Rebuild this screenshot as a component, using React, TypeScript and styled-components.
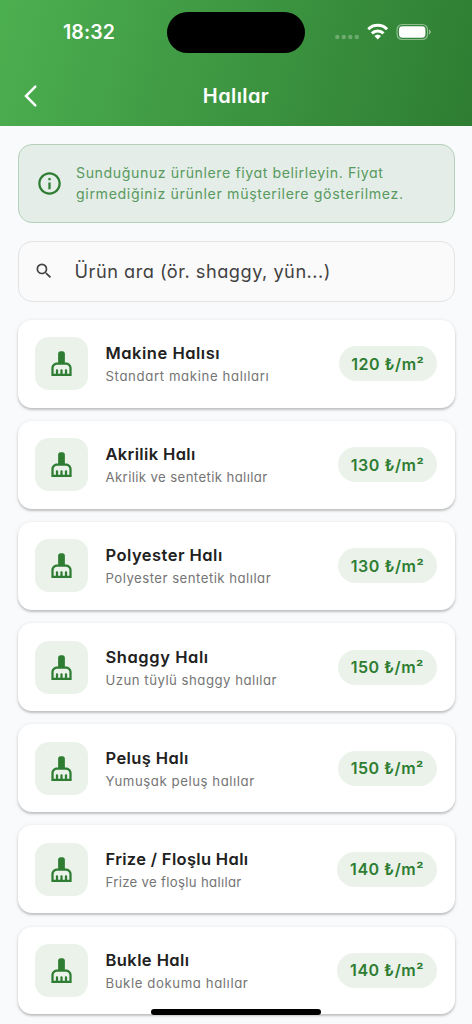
import React from 'react';
import styled, { createGlobalStyle } from 'styled-components';
import { MdCleaningServices, MdInfoOutline, MdSearch } from 'react-icons/md';

const GlobalStyle = createGlobalStyle`
  *, *::before, *::after { box-sizing: border-box; }
  body {
    margin: 0;
    background: #f8fafc;
    font-family: Inter, "Liberation Sans", sans-serif;
    font-feature-settings: "cv11" 1;
    -webkit-font-smoothing: antialiased;
  }
`;

const Screen = styled.div`
  position: relative;
  width: 472px;
  height: 1024px;
  overflow: hidden;
  background: #f8fafc;
`;

const Header = styled.header`
  height: 126px;
  background: linear-gradient(105deg, #4caf50 0%, #2e7d32 100%);
  color: #fff;
`;

const StatusBar = styled.div`
  display: grid;
  grid-template-columns: 167px 138px 1fr;
  height: 66px;
  padding-top: 12px;
`;

const Clock = styled.div`
  padding-left: 63px;
  font-size: 19.5px;
  line-height: 41px;
  font-weight: 600;
  letter-spacing: 0.1px;
  white-space: nowrap;
  font-feature-settings: "cv11" 0;
`;

const Island = styled.div`
  height: 41px;
  border-radius: 21px;
  background: #000;
`;

const StatusIcons = styled.div`
  display: flex;
  padding-left: 29px;
`;

const NavBar = styled.div`
  display: grid;
  grid-template-columns: 60px 1fr 60px;
  align-items: center;
  height: 60px;
`;

const BackButton = styled.button`
  display: flex;
  align-items: center;
  height: 60px;
  padding: 0 0 0 22px;
  border: 0;
  background: none;
  color: #fff;
`;

const Title = styled.h1`
  margin: 0;
  text-align: center;
  font-size: 20px;
  line-height: 30px;
  font-weight: 600;
  letter-spacing: 0.4px;
`;

const Content = styled.main`
  display: flex;
  flex-direction: column;
  gap: 18px;
  padding: 18px 17.5px 0;
`;

const Notice = styled.section`
  display: flex;
  align-items: center;
  height: 79px;
  padding-left: 17px;
  border: 1px solid #b5d0bb;
  border-radius: 14px;
  background: #e4ede8;
  color: #2e7d32;
`;

const NoticeText = styled.p`
  margin: 0 0 1px 13.5px;
  font-size: 14.2px;
  line-height: 21px;
  color: #599a5f;
  white-space: nowrap;
`;

const Line = styled.span<{ $track: number }>`
  display: block;
  letter-spacing: ${(p) => p.$track}px;
`;

const SearchField = styled.div`
  display: flex;
  align-items: center;
  gap: 21px;
  height: 61px;
  padding: 0 0 1px 15px;
  border: 1px solid #e2e3e5;
  border-radius: 14px;
  background: #fafafa;
  color: #424242;
  font-size: 18.2px;
  white-space: nowrap;
`;

const List = styled.ul`
  display: flex;
  flex-direction: column;
  gap: 13.6px;
  margin: 0;
  padding: 0;
  list-style: none;
`;

const Card = styled.li`
  display: flex;
  align-items: center;
  height: 87.5px;
  padding: 0 17.5px;
  border-radius: 14px;
  background: #fff;
  box-shadow: 0 2px 2px rgba(0, 0, 0, 0.16), 0 1px 4px rgba(0, 0, 0, 0.12);
`;

const IconTile = styled.div`
  display: flex;
  align-items: center;
  justify-content: center;
  width: 53px;
  height: 53px;
  border-radius: 14px;
  background: #eaf2ea;
  color: #2e7d32;
`;

const Info = styled.div`
  flex: 1;
  margin-left: 17.5px;
  padding-top: 3px;
  white-space: nowrap;
`;

const Name = styled.div<{ $track: number }>`
  font-size: 16.5px;
  line-height: 23px;
  font-weight: 600;
  color: #212121;
  letter-spacing: ${(p) => p.$track - 0.1}px;
`;

const Description = styled.div<{ $track: number }>`
  font-size: 13.2px;
  line-height: 23px;
  color: #757575;
  letter-spacing: ${(p) => p.$track - 0.08}px;
`;

const Price = styled.div<{ $width: number }>`
  display: flex;
  align-items: center;
  justify-content: center;
  width: ${(p) => p.$width}px;
  height: 35px;
  border-radius: 18px;
  background: #eaf2ea;
  color: #2e7d32;
  font-size: 16px;
  font-weight: 600;
  letter-spacing: 0.5px;
  white-space: pre;
`;

const HomeIndicator = styled.div`
  position: absolute;
  left: 151px;
  bottom: 9px;
  width: 170px;
  height: 6px;
  border-radius: 3px;
  background: #000;
`;

interface Product {
  name: string;
  nameTrack: number;
  description: string;
  descriptionTrack: number;
  price: number;
  priceWidth: number;
}

const products: Product[] = [
  { name: 'Makine Halısı', nameTrack: 0.62, description: 'Standart makine halıları', descriptionTrack: 0.7, price: 120, priceWidth: 98.5 },
  { name: 'Akrilik Halı', nameTrack: 0.46, description: 'Akrilik ve sentetik halılar', descriptionTrack: 0.46, price: 130, priceWidth: 99 },
  { name: 'Polyester Halı', nameTrack: 0.57, description: 'Polyester sentetik halılar', descriptionTrack: 0.56, price: 130, priceWidth: 99 },
  { name: 'Shaggy Halı', nameTrack: 0.68, description: 'Uzun tüylü shaggy halılar', descriptionTrack: 0.57, price: 150, priceWidth: 99.5 },
  { name: 'Peluş Halı', nameTrack: 0.5, description: 'Yumuşak peluş halılar', descriptionTrack: 0.64, price: 150, priceWidth: 99.5 },
  { name: 'Frize / Floşlu Halı', nameTrack: 0.43, description: 'Frize ve floşlu halılar', descriptionTrack: 0.39, price: 140, priceWidth: 100 },
  { name: 'Bukle Halı', nameTrack: 0.52, description: 'Bukle dokuma halılar', descriptionTrack: 0.67, price: 140, priceWidth: 100 },
];

const StatusGlyphs = () => (
  <svg width="98" height="41" viewBox="0 0 98 41" fill="none">
    <g fill="#fff" fillOpacity="0.27">
      <circle cx="3.3" cy="25" r="2.2" />
      <circle cx="9.8" cy="25" r="2.2" />
      <circle cx="16.3" cy="25" r="2.2" />
      <circle cx="22.8" cy="25" r="2.2" />
    </g>
    <g stroke="#fff" strokeWidth="3">
      <path d="M34.3 17.3a13.2 13.2 0 0 1 18.8 0" />
      <path d="M37.9 21.4a8.2 8.2 0 0 1 11.6 0" />
    </g>
    <path d="M40.4 24.1a4.8 4.8 0 0 1 6.6 0L43.7 27.5z" fill="#fff" />
    <rect x="63.1" y="12.5" width="30.4" height="15" rx="5" stroke="#fff" strokeOpacity="0.45" strokeWidth="1.2" />
    <rect x="65" y="14.3" width="26.4" height="11.4" rx="3.4" fill="#fff" />
    <path d="M95 17.5v5c1-.4 1.7-1.4 1.7-2.5S96 17.9 95 17.5z" fill="#fff" fillOpacity="0.5" />
  </svg>
);

const ProductCard = ({ product }: { product: Product }) => (
  <Card>
    <IconTile>
      <MdCleaningServices size={27} />
    </IconTile>
    <Info>
      <Name $track={product.nameTrack}>{product.name}</Name>
      <Description $track={product.descriptionTrack}>{product.description}</Description>
    </Info>
    <Price $width={product.priceWidth}>{`${product.price} ₺/m²`}</Price>
  </Card>
);

export default function App() {
  return (
    <Screen>
      <GlobalStyle />
      <Header>
        <StatusBar>
          <Clock>18:32</Clock>
          <Island />
          <StatusIcons>
            <StatusGlyphs />
          </StatusIcons>
        </StatusBar>
        <NavBar>
          <BackButton aria-label="Geri">
            <svg width="18" height="24" viewBox="0 0 18 24" fill="none">
              <path d="M13.3 2.7L4 12l9.3 9.3" stroke="#fff" strokeWidth="2.5" strokeLinecap="round" />
            </svg>
          </BackButton>
          <Title>Halılar</Title>
        </NavBar>
      </Header>
      <Content>
        <Notice>
          <MdInfoOutline size={27} />
          <NoticeText>
            <Line $track={0.56}>Sunduğunuz ürünlere fiyat belirleyin. Fiyat</Line>
            <Line $track={0.63}>girmediğiniz ürünler müşterilere gösterilmez.</Line>
          </NoticeText>
        </Notice>
        <SearchField>
          <MdSearch size={20} />
          <Line $track={0.5}>Ürün ara (ör. shaggy, yün...)</Line>
        </SearchField>
        <List>
          {products.map((product) => (
            <ProductCard key={product.name} product={product} />
          ))}
        </List>
      </Content>
      <HomeIndicator />
    </Screen>
  );
}
